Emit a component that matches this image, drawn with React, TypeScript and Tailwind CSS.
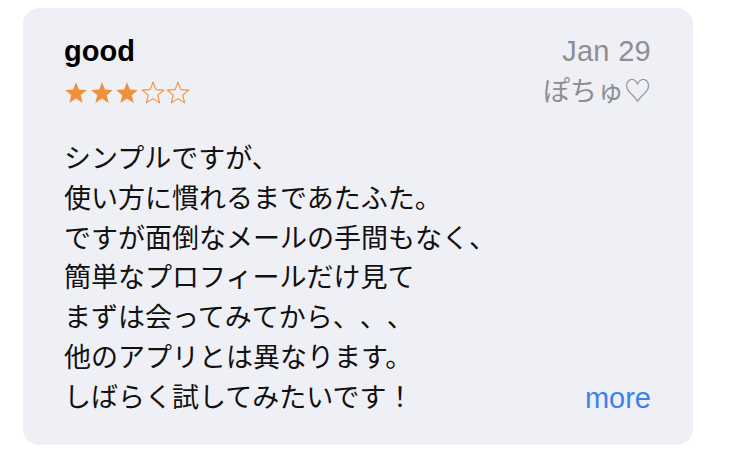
const lines = [
  "シンプルですが、",
  "使い方に慣れるまであたふた。",
  "ですが面倒なメールの手間もなく、",
  "簡単なプロフィールだけ見て",
  "まずは会ってみてから、、、",
  "他のアプリとは異なります。",
  "しばらく試してみたいです！",
];

function Star({ filled }: { filled: boolean }) {
  return (
    <svg viewBox="0 0 24 23" className="w-[24px] h-[23px]">
      <polygon
        points="12,1.2 14.9,8.6 22.8,9.1 16.7,14.2 18.7,21.9 12,17.6 5.3,21.9 7.3,14.2 1.2,9.1 9.1,8.6"
        fill={filled ? "#f0903a" : "none"}
        stroke="#f0903a"
        strokeWidth={filled ? 0 : 1.1}
        strokeLinejoin="round"
      />
    </svg>
  );
}

export default function App() {
  const rating = 3;

  return (
    <div className="w-[733px] h-[462px] bg-white pl-[23px] pt-[8px] font-['Liberation_Sans','Noto_Sans_CJK_JP',sans-serif] [text-spacing-trim:space-all]">
      <div className="w-[670px] h-[437px] rounded-[16px] bg-[#eff0f5] pl-[41px] pr-[42px] pt-[26px]">
        <div className="flex justify-between">
          <div>
            <div className="text-[29px] leading-[34px] font-bold text-black">good</div>
            <div className="flex gap-[1.5px] mt-[13px]">
              {[1, 2, 3, 4, 5].map((i) => (
                <Star key={i} filled={i <= rating} />
              ))}
            </div>
          </div>
          <div className="flex flex-col items-end text-[#8e8e93]">
            <div className="text-[29px] leading-[34px] tracking-[0.3px]">Jan 29</div>
            <div className="text-[27px] leading-[34px] mt-[7px]">ぽちゅ♡</div>
          </div>
        </div>

        <div className="flex justify-between items-end mt-[31px]">
          <div className="text-[27px] leading-[39.8px] text-[#111]">
            {lines.map((l) => (
              <div key={l}>{l}</div>
            ))}
          </div>
          <button className="text-[29px] leading-[39.8px] text-[#3b82f0]">more</button>
        </div>
      </div>
    </div>
  );
}
